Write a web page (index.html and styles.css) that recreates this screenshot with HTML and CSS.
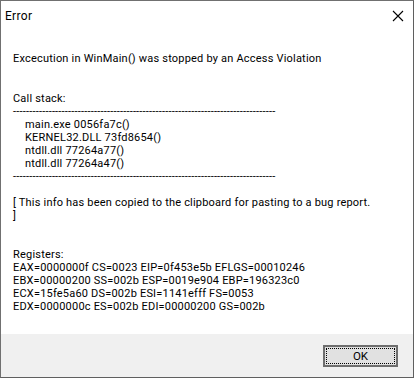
FILE: index.html
```html
<!doctype html>
<html lang="en">
<head>
    <meta charset="UTF-8">
    <title>Error</title>
    <link rel="stylesheet" href="styles.css">
</head>
<body>
    <div id="dialog">
        <div class="titlebar">
            <span class="title">Error</span>
            <svg class="close" width="12" height="12" viewBox="0 0 12 12">
                <path d="M1 1L11 11M11 1L1 11" stroke="#000" stroke-width="1.1" fill="none"/>
            </svg>
        </div>
        <div class="content">
            <div class="msg">Excecution in WinMain() was stopped by an Access Violation</div>
            <div class="blank"></div>
            <div class="line">Call stack:</div>
            <div class="line">---------------------------------------------------------------------------------</div>
            <div class="line indent">main.exe 0056fa7c()</div>
            <div class="line indent">KERNEL32.DLL 73fd8654()</div>
            <div class="line indent">ntdll.dll 77264a77()</div>
            <div class="line indent">ntdll.dll 77264a47()</div>
            <div class="line">---------------------------------------------------------------------------------</div>
            <div class="line">&nbsp;</div>
            <div class="line">[ This info has been copied to the clipboard for pasting to a bug report.</div>
            <div class="line">]</div>
            <div class="line">&nbsp;</div>
            <div class="line">&nbsp;</div>
            <div class="line">Registers:</div>
            <div class="line">EAX=0000000f CS=0023 EIP=0f453e5b EFLGS=00010246</div>
            <div class="line">EBX=00000200 SS=002b ESP=0019e904 EBP=196323c0</div>
            <div class="line">ECX=15fe5a60 DS=002b ESI=1141efff FS=0053</div>
            <div class="line">EDX=0000000c ES=002b EDI=00000200 GS=002b</div>
        </div>
        <div class="footer">
            <div class="ok"><span class="focus">OK</span></div>
        </div>
    </div>
</body>
</html>
```

FILE: styles.css
```css
body{
    margin: 0;
    background-color: #fff;
}
#dialog{
    width: 412px;
    height: 376px;
    border: 1px solid #707070;
    border-right-color: #5f5f5f;
    border-bottom-color: #5f5f5f;
    display: flex;
    flex-direction: column;
    font-family: "Roboto", "Noto Sans", sans-serif;
    font-size: 11px;
    color: #000;
    background-color: #fff;
}
.titlebar{
    height: 30px;
    display: flex;
    align-items: center;
    justify-content: space-between;
    padding: 0 9px 0 4px;
}
.title{
    font-size: 12px;
    letter-spacing: 0.3px;
}
.close{
    display: block;
}
.content{
    flex: 1;
    padding: 21px 0 0 12px;
    letter-spacing: 0.2px;
}
.msg{
    height: 13px;
    line-height: 13px;
    white-space: pre;
}
.blank{
    height: 27px;
}
.line{
    height: 13px;
    line-height: 13px;
    white-space: pre;
}
.indent{
    padding-left: 12px;
}
.footer{
    height: 43px;
    background-color: #f0f0f0;
    display: flex;
    align-items: center;
    justify-content: flex-end;
    padding-right: 15px;
}
.ok{
    width: 71px;
    height: 18px;
    border: 2px solid #6e6e6e;
    background-color: #e1e1e1;
    display: flex;
    padding: 0;
    margin-top: 1px;
}
.focus{
    flex: 1;
    margin: 1px;
    border: 1px dotted #000;
    text-align: center;
    line-height: 14px;
    font-size: 11.5px;
}
```
